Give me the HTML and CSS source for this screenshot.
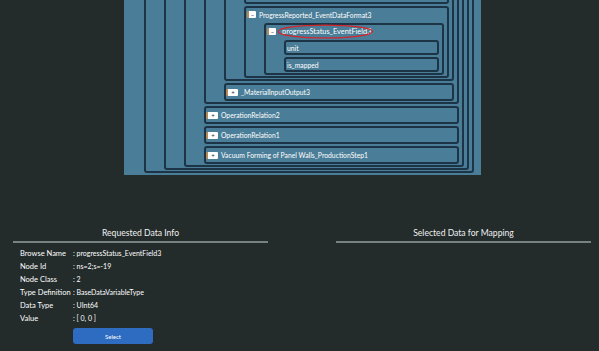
FILE: index.html
```html
<!DOCTYPE html>
<html>
<head>
<meta charset="utf-8">
<link rel="stylesheet" href="styles.css">
</head>
<body>
<div class="tree-viewport">
  <div class="panel">
    <div class="node">
      <div class="node">
        <div class="node">
          <div class="node">
            <div class="head"></div>
            <div class="node">
              <div class="head"></div>
              <div class="node filler"></div>
              <div class="node">
                <div class="head"><span class="tog">−</span><span class="label">ProgressReported_EventDataFormat3</span></div>
                <div class="node">
                  <div class="head"><span class="tog">−</span><span class="label circled">progressStatus_EventField3<svg class="ring" viewBox="0 0 100 14" preserveAspectRatio="none"><ellipse cx="50" cy="7" rx="49" ry="6" fill="none" stroke="#d4262c" stroke-width="1.3" vector-effect="non-scaling-stroke"/></svg></span></div>
                  <div class="leaf">unit</div>
                  <div class="leaf">is_mapped</div>
                </div>
              </div>
            </div>
            <div class="leaf expandable"><span class="tog plus">+</span><span class="label">_MaterialInputOutput3</span></div>
          </div>
          <div class="leaf expandable"><span class="tog plus">+</span><span class="label">OperationRelation2</span></div>
          <div class="leaf expandable"><span class="tog plus">+</span><span class="label">OperationRelation1</span></div>
          <div class="leaf expandable"><span class="tog plus">+</span><span class="label">Vacuum Forming of Panel Walls_ProductionStep1</span></div>
        </div>
      </div>
    </div>
  </div>
</div>

<div class="info">
  <section class="col">
    <h2 class="col-title">Requested Data Info</h2>
    <div class="props">
      <div class="key">Browse Name</div><div class="val">: progressStatus_EventField3</div>
      <div class="key">Node Id</div><div class="val">: ns=2;s=-19</div>
      <div class="key">Node Class</div><div class="val">: 2</div>
      <div class="key">Type Definition</div><div class="val">: BaseDataVariableType</div>
      <div class="key">Data Type</div><div class="val">: UInt64</div>
      <div class="key">Value</div><div class="val">: [ 0, 0 ]</div>
    </div>
    <button class="btn">Select</button>
  </section>
  <section class="col">
    <h2 class="col-title">Selected Data for Mapping</h2>
  </section>
</div>
</body>
</html>
```

FILE: styles.css
```css
* { box-sizing: border-box; }

body {
  margin: 0;
  background: #232b2b;
  font-family: Lato, "Open Sans", sans-serif;
  color: #ffffff;
}

.tree-viewport {
  height: 175px;
  overflow: hidden;
  display: flex;
  flex-direction: column;
  justify-content: flex-end;
}

.panel {
  flex-shrink: 0;
  margin-left: 124px;
  width: 357px;
  background: #4a7d97;
  padding: 0 7px 2px 20px;
}

.node {
  border: 2px solid #1c3445;
  border-radius: 3px;
  padding: 0 3px 1px 18px;
  display: flex;
  flex-direction: column;
  gap: 2px;
}

.node.filler {
  height: 60px;
}

.head {
  height: 13px;
  margin-left: -17px;
  display: flex;
  align-items: center;
  font-size: 6.8px;
  white-space: nowrap;
}

.leaf {
  border: 2px solid #1c3445;
  border-radius: 3px;
  height: 15px;
  display: flex;
  align-items: center;
  padding-left: 1px;
  font-size: 6.8px;
  white-space: nowrap;
}

.leaf.expandable {
  height: 18px;
  padding-left: 0;
}

.tog {
  flex-shrink: 0;
  width: 9px;
  height: 7px;
  background: #ffffff;
  border-left: 2px solid #b48a58;
  border-radius: 1px;
  color: #1b2a35;
  font-size: 6px;
  line-height: 7px;
  text-align: center;
  margin-right: 3px;
}

.tog.plus {
  width: 12px;
}

.circled {
  display: block;
  position: relative;
  padding-left: 3px;
  font-size: 7.4px;
  line-height: 9px;
}

.ring {
  display: block;
  position: absolute;
  left: -2px;
  top: -3px;
  width: calc(100% + 4px);
  height: 15px;
  overflow: visible;
  pointer-events: none;
}

.info {
  display: grid;
  grid-template-columns: 255px 255px;
  column-gap: 68px;
  padding: 52px 0 0 13px;
}

.col-title {
  margin: 0;
  text-align: center;
  font-size: 8.6px;
  font-weight: normal;
  line-height: 12px;
  padding-bottom: 2px;
  border-bottom: 2px solid #76837f;
  color: #f0f0f0;
}

.props {
  display: grid;
  grid-template-columns: 53px auto;
  margin-top: 4px;
  padding-left: 7px;
  font-size: 7.5px;
  line-height: 13px;
}

.props .val {
  font-size: 7px;
}

.btn {
  display: block;
  margin: 3px 0 0 60px;
  width: 80px;
  height: 16px;
  background: #2e6cc1;
  border: none;
  border-radius: 3px;
  color: #ffffff;
  font-family: inherit;
  font-size: 6px;
  padding: 0;
}
```
